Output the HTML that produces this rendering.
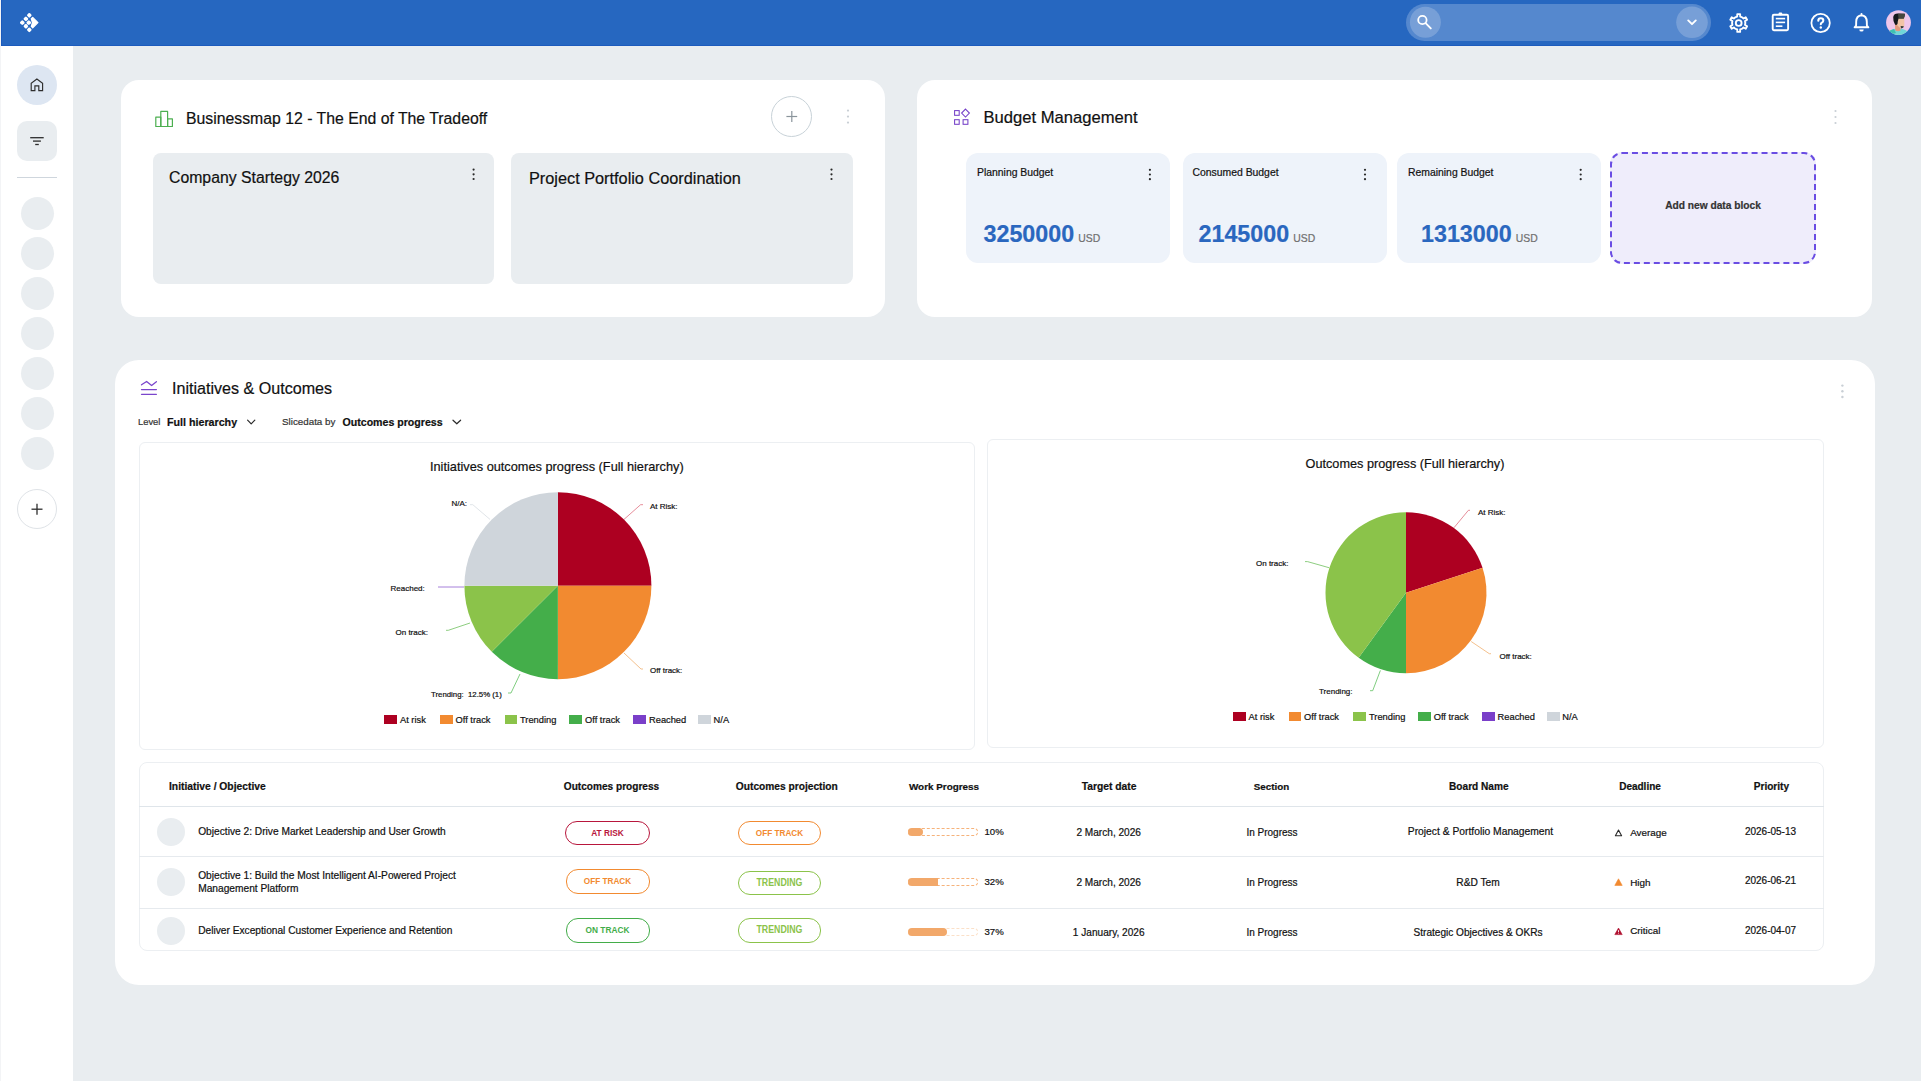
<!DOCTYPE html>
<html><head><meta charset="utf-8">
<style>
*{margin:0;padding:0;box-sizing:border-box}
html,body{width:1921px;height:1081px;overflow:hidden;background:#e9edf0;font-family:"Liberation Sans",sans-serif;color:#111}
.a{position:absolute}
.t{position:absolute;white-space:nowrap;height:20px;line-height:20px;-webkit-text-stroke:0.2px currentColor}
.c{text-align:center;width:300px}
.b{font-weight:bold}
</style></head><body>
<!-- left edge -->
<div class="a" style="left:0;top:0;width:1px;height:1081px;background:#f3f4f6"></div>
<!-- header -->
<div class="a" style="left:1px;top:0;width:1920px;height:46px;background:#2667c0;border-left:1px solid #1c5bbd;border-bottom:1px solid #1c5bbd"></div>
<!-- sidebar -->
<div class="a" style="left:1px;top:46px;width:72px;height:1035px;background:#fff"></div>

<!-- cards -->
<div class="a" style="left:121px;top:80px;width:764px;height:237px;background:#fff;border-radius:18px"></div>
<div class="a" style="left:917px;top:80px;width:955px;height:237px;background:#fff;border-radius:18px"></div>
<div class="a" style="left:115px;top:360px;width:1760px;height:625px;background:#fff;border-radius:24px"></div>

<!-- card1 inner -->
<div class="a" style="left:152.6px;top:153px;width:341.6px;height:131px;background:#e9edf0;border-radius:8px"></div>
<div class="a" style="left:511.3px;top:153px;width:341.3px;height:131px;background:#e9edf0;border-radius:8px"></div>
<div class="a" style="left:771.3px;top:96px;width:41px;height:41px;border:1px solid #c8d2d8;border-radius:50%"></div>

<!-- budget sub cards -->
<div class="a" style="left:966px;top:153px;width:204px;height:110px;background:#eef3fa;border-radius:12px"></div>
<div class="a" style="left:1183px;top:153px;width:204px;height:110px;background:#eef3fa;border-radius:12px"></div>
<div class="a" style="left:1397px;top:153px;width:204px;height:110px;background:#eef3fa;border-radius:12px"></div>
<div class="a" style="left:1610px;top:152px;width:206px;height:112px;background:#efedfb;border:2px dashed #6a4de3;border-radius:12px"></div>

<!-- chart boxes & table -->
<div class="a" style="left:139px;top:442px;width:836px;height:308px;border:1px solid #eceff2;border-radius:6px"></div>
<div class="a" style="left:987px;top:439px;width:837px;height:309px;border:1px solid #eceff2;border-radius:6px"></div>
<div class="a" style="left:139px;top:762px;width:1685px;height:189px;border:1px solid #eceff2;border-radius:8px;background:#fff"></div>
<div class="a" style="left:139px;top:806px;width:1685px;height:1px;background:#dfe5ea"></div>
<div class="a" style="left:139px;top:856px;width:1685px;height:1px;background:#e6eaee"></div>
<div class="a" style="left:139px;top:908px;width:1685px;height:1px;background:#e6eaee"></div>

<!-- SIDEBAR items -->
<div class="a" style="left:17px;top:65px;width:40px;height:40px;border-radius:50%;background:#dde6f2"></div>
<div class="a" style="left:17px;top:121px;width:40px;height:40px;border-radius:10px;background:#e9edf0"></div>
<div class="a" style="left:17px;top:177px;width:40px;height:1px;background:#cfd6dd"></div>
<div class="a" style="left:20.5px;top:196.5px;width:33px;height:33px;border-radius:50%;background:#e9edf0"></div>
<div class="a" style="left:20.5px;top:236.5px;width:33px;height:33px;border-radius:50%;background:#e9edf0"></div>
<div class="a" style="left:20.5px;top:276.5px;width:33px;height:33px;border-radius:50%;background:#e9edf0"></div>
<div class="a" style="left:20.5px;top:316.5px;width:33px;height:33px;border-radius:50%;background:#e9edf0"></div>
<div class="a" style="left:20.5px;top:356.5px;width:33px;height:33px;border-radius:50%;background:#e9edf0"></div>
<div class="a" style="left:20.5px;top:396.5px;width:33px;height:33px;border-radius:50%;background:#e9edf0"></div>
<div class="a" style="left:20.5px;top:436.5px;width:33px;height:33px;border-radius:50%;background:#e9edf0"></div>
<div class="a" style="left:17px;top:489px;width:40px;height:40px;border-radius:50%;border:1px solid #dfe3e7"></div>

<!-- table row circles -->
<div class="a" style="left:157px;top:818px;width:28px;height:28px;border-radius:50%;background:#e9edf0"></div>
<div class="a" style="left:157px;top:867.8px;width:28px;height:28px;border-radius:50%;background:#e9edf0"></div>
<div class="a" style="left:157px;top:916.5px;width:28px;height:28px;border-radius:50%;background:#e9edf0"></div>

<svg class="a" style="left:0;top:0" width="1921" height="1081" viewBox="0 0 1921 1081">

<!-- logo -->
<g fill="#fff">
<rect x="-1.95" y="-1.95" width="3.9" height="3.9" rx="1.15" transform="translate(29.3,15.3) rotate(45)"/>
<rect x="-1.95" y="-1.95" width="3.9" height="3.9" rx="1.15" transform="translate(25.9,18.9) rotate(45)"/>
<rect x="-1.95" y="-1.95" width="3.9" height="3.9" rx="1.15" transform="translate(22.3,22.6) rotate(45)"/>
<rect x="-1.95" y="-1.95" width="3.9" height="3.9" rx="1.15" transform="translate(25.9,26.2) rotate(45)"/>
<rect x="-1.95" y="-1.95" width="3.9" height="3.9" rx="1.15" transform="translate(29.3,29.8) rotate(45)"/>
<rect x="-1.95" y="-1.95" width="3.9" height="3.9" rx="1.15" transform="translate(28.8,22.6) rotate(45)"/>
<path d="M32.7,17.4 L37.9,22.6 L32.7,27.8 L31.3,26.4 L32.5,22.6 L31.3,18.8 Z" stroke="#fff" stroke-width="1.3" stroke-linejoin="round"/>
</g>
<!-- search -->
<rect x="1406" y="4" width="305" height="37" rx="18.5" fill="#ffffff" fill-opacity="0.22"/>
<circle cx="1425.4" cy="22.3" r="15.5" fill="#ffffff" fill-opacity="0.2"/>
<circle cx="1692" cy="22.3" r="15.8" fill="#ffffff" fill-opacity="0.2"/>
<circle cx="1422.4" cy="20" r="4.2" fill="none" stroke="#fff" stroke-width="1.8"/>
<line x1="1425.6" y1="23.2" x2="1430.8" y2="28.4" stroke="#fff" stroke-width="1.9" stroke-linecap="round"/>
<polyline points="1688.2,20.4 1692,24.2 1695.8,20.4" fill="none" stroke="#fff" stroke-width="1.9" stroke-linecap="round" stroke-linejoin="round"/>
<!-- gear -->
<path d="M1735.81,17.07 L1737.22,16.57 L1737.29,14.11 L1740.11,14.11 L1740.18,16.57 L1741.59,17.07 L1742.39,17.53 L1743.53,18.50 L1745.69,17.34 L1747.10,19.77 L1745.01,21.07 L1745.28,22.54 L1745.28,23.46 L1745.01,24.93 L1747.10,26.23 L1745.69,28.66 L1743.53,27.50 L1742.39,28.47 L1741.59,28.93 L1740.18,29.43 L1740.11,31.89 L1737.29,31.89 L1737.22,29.43 L1735.81,28.93 L1735.01,28.47 L1733.87,27.50 L1731.71,28.66 L1730.30,26.23 L1732.39,24.93 L1732.12,23.46 L1732.12,22.54 L1732.39,21.07 L1730.30,19.77 L1731.71,17.34 L1733.87,18.50 L1735.01,17.53 Z" fill="none" stroke="#fff" stroke-width="1.9" stroke-linejoin="round"/>
<circle cx="1738.7" cy="23" r="2.9" fill="none" stroke="#fff" stroke-width="1.9"/>
<!-- clipboard -->
<rect x="1772.7" y="14.8" width="15.4" height="15.4" rx="1.2" fill="none" stroke="#fff" stroke-width="1.9"/>
<rect x="1778.6" y="12.6" width="3.6" height="2.6" rx="1" fill="#fff"/>
<g stroke="#fff" stroke-width="1.6" stroke-linecap="butt">
<line x1="1775.8" y1="18.6" x2="1785.1" y2="18.6"/>
<line x1="1775.8" y1="22.4" x2="1785.1" y2="22.4"/>
<line x1="1775.8" y1="26.2" x2="1782.4" y2="26.2"/>
</g>
<!-- help -->
<circle cx="1820.6" cy="23" r="9.2" fill="none" stroke="#fff" stroke-width="1.8"/>
<path d="M1818.3,20.7 Q1818.3,18.3 1820.8,18.3 Q1823.3,18.3 1823.3,20.5 Q1823.3,21.9 1821.9,22.6 Q1820.8,23.2 1820.8,24.3" fill="none" stroke="#fff" stroke-width="2.1" stroke-linecap="round"/>
<circle cx="1820.8" cy="27.5" r="1.2" fill="#fff"/>
<!-- bell -->
<path d="M1861.5,15.2 Q1866.6,15.6 1866.8,21.6 L1866.9,25.6 L1868.4,27.3 L1854.6,27.3 L1856.1,25.6 L1856.2,21.6 Q1856.4,15.6 1861.5,15.2 Z" fill="none" stroke="#fff" stroke-width="1.9" stroke-linejoin="round"/>
<circle cx="1861.5" cy="13.9" r="1" fill="#fff"/>
<path d="M1859.3,29.4 A2.2,2.2 0 0 0 1863.7,29.4 Z" fill="#fff"/>
<!-- avatar -->
<defs><clipPath id="av"><circle cx="1898.5" cy="22.6" r="12.4"/></clipPath></defs>
<circle cx="1898.5" cy="22.6" r="12.4" fill="#efc6ea"/>
<g clip-path="url(#av)">
<path d="M1884,36 Q1890,28.5 1898.5,28.4 Q1907,28.5 1913,36 Z" fill="#6fd6d8"/>
<path d="M1885,36 Q1888,30 1894,29 L1896,33 Z" fill="#3fc0b0"/>
<path d="M1895,24 L1900.5,24 L1900.5,30.5 Q1898,32 1895.2,30.2 Z" fill="#e59a7c"/>
<path d="M1897,17.5 L1904.3,17.5 L1904.3,26 Q1902,28.5 1899.5,27.5 L1897,25 Z" fill="#f2c4a6"/>
<path d="M1900.5,26.2 Q1902.5,25.6 1904,26.6 Q1903.5,28.4 1901.2,28.4 Z" fill="#3a3a36"/>
<path d="M1893.2,17 Q1894,13.4 1898,13.6 L1904.8,13.8 Q1905,16.5 1903.8,18.4 L1898.6,18.4 Q1897.6,21 1897.5,24 Q1896.2,25.6 1895,24.6 Q1893,22 1893.2,17 Z" fill="#15171c"/>
<path d="M1898,13.8 L1904.8,13.8 Q1905,16.5 1903.8,18.4 L1898.6,18.4 Z" fill="#45463e"/>
</g>

<!-- sidebar icons -->
<path d="M31.2,90.6 V83.4 L36.9,79 L42.6,83.4 V90.6 H38.8 V85.8 H34.9 V90.6 Z" fill="none" stroke="#2d2d2d" stroke-width="1.15" stroke-linejoin="miter"/>
<g stroke="#2d2d2d" stroke-width="1.3">
<line x1="30.2" y1="137.7" x2="43.7" y2="137.7"/>
<line x1="33" y1="141.1" x2="40.9" y2="141.1"/>
<line x1="35.2" y1="144.5" x2="38.8" y2="144.5"/>
</g>
<g stroke="#2d2d2d" stroke-width="1.3">
<line x1="31.5" y1="509.2" x2="42.5" y2="509.2"/>
<line x1="37" y1="503.7" x2="37" y2="514.7"/>
</g>

<!-- card icons -->
<g fill="none" stroke="#4caf50" stroke-width="1.2" stroke-linejoin="round">
<rect x="155.8" y="117.1" width="5" height="9.4"/>
<rect x="160.8" y="111.4" width="6.8" height="15.1"/>
<rect x="167.6" y="118.9" width="4.8" height="7.6"/>
</g>
<g fill="none" stroke="#7540c8" stroke-width="1.05">
<rect x="954.6" y="110.6" width="4.6" height="4.7"/>
<rect x="954.6" y="119.7" width="4.6" height="4.6"/>
<rect x="963.1" y="119.7" width="4.8" height="4.6"/>
<path d="M965.5,109.1 L969.4,113.1 L965.5,117.1 L961.6,113.1 Z"/>
</g>
<g fill="none" stroke="#7a45cc" stroke-width="1.3" stroke-linecap="round" stroke-linejoin="round">
<polyline points="141.5,384.8 146.6,381.5 151.6,385.5 156.4,381.7"/>
<line x1="141.5" y1="389.6" x2="156.4" y2="389.6"/>
<line x1="141.5" y1="394.3" x2="156.4" y2="394.3"/>
</g>
<!-- plus in card1 -->
<g stroke="#8a949b" stroke-width="1.2">
<line x1="786.4" y1="116.5" x2="797.2" y2="116.5"/>
<line x1="791.8" y1="111.1" x2="791.8" y2="121.9"/>
</g>
<!-- menu dots -->
<g fill="#2a2a2a">
<circle cx="473.6" cy="169.6" r="1.1"/><circle cx="473.6" cy="174.3" r="1.1"/><circle cx="473.6" cy="179" r="1.1"/>
<circle cx="831.5" cy="169.6" r="1.1"/><circle cx="831.5" cy="174.3" r="1.1"/><circle cx="831.5" cy="179" r="1.1"/>
<circle cx="1149.9" cy="169.8" r="1.1"/><circle cx="1149.9" cy="174.5" r="1.1"/><circle cx="1149.9" cy="179.2" r="1.1"/>
<circle cx="1365" cy="169.8" r="1.1"/><circle cx="1365" cy="174.5" r="1.1"/><circle cx="1365" cy="179.2" r="1.1"/>
<circle cx="1580.7" cy="169.8" r="1.1"/><circle cx="1580.7" cy="174.5" r="1.1"/><circle cx="1580.7" cy="179.2" r="1.1"/>
</g>
<g fill="#c9cfd5">
<circle cx="848" cy="110.6" r="1.1"/><circle cx="848" cy="116.6" r="1.1"/><circle cx="848" cy="122.6" r="1.1"/>
<circle cx="1835.5" cy="111" r="1.1"/><circle cx="1835.5" cy="117" r="1.1"/><circle cx="1835.5" cy="123" r="1.1"/>
<circle cx="1842.4" cy="385.6" r="1.2"/><circle cx="1842.4" cy="391.3" r="1.2"/><circle cx="1842.4" cy="397" r="1.2"/>
</g>
<!-- select chevrons -->
<g fill="none" stroke="#2a2a2a" stroke-width="1.2" stroke-linecap="round" stroke-linejoin="round">
<polyline points="247.6,420.2 251.2,423.8 254.8,420.2"/>
<polyline points="453,420.2 456.8,423.8 460.6,420.2"/>
</g>
<!-- deadline icons -->
<path d="M1618.5,830 L1621.6,835.8 L1615.4,835.8 Z" fill="none" stroke="#2a2a2a" stroke-width="1.1" stroke-linejoin="round"/>
<path d="M1618.5,878.8 L1622.2,885.4 L1614.8,885.4 Z" fill="#f28a30" stroke="#f28a30" stroke-width="0.6" stroke-linejoin="round"/>
<path d="M1618.5,928 L1622.2,934.6 L1614.8,934.6 Z" fill="#b0102f" stroke="#b0102f" stroke-width="0.6" stroke-linejoin="round"/>
<line x1="1618.5" y1="930.2" x2="1618.5" y2="932.3" stroke="#fff" stroke-width="0.9"/><circle cx="1618.5" cy="933.5" r="0.45" fill="#fff"/>

<!-- PIES -->
<path fill="#ad0021" d="M557.90,585.70 L557.90,492.20 A93.5,93.5 0 0 1 651.40,585.70 Z"/>
<path fill="#f28a30" d="M557.90,585.70 L651.40,585.70 A93.5,93.5 0 0 1 557.90,679.20 Z"/>
<path fill="#44ae4a" d="M557.90,585.70 L557.90,679.20 A93.5,93.5 0 0 1 491.79,651.81 Z"/>
<path fill="#8bc34a" d="M557.90,585.70 L491.79,651.81 A93.5,93.5 0 0 1 464.40,585.70 Z"/>
<path fill="#cfd5db" d="M557.90,585.70 L464.40,585.70 A93.5,93.5 0 0 1 557.90,492.20 Z"/>
<path fill="#ad0021" d="M1406.00,592.70 L1406.00,512.20 A80.5,80.5 0 0 1 1482.56,567.82 Z"/>
<path fill="#f28a30" d="M1406.00,592.70 L1482.56,567.82 A80.5,80.5 0 0 1 1406.00,673.20 Z"/>
<path fill="#44ae4a" d="M1406.00,592.70 L1406.00,673.20 A80.5,80.5 0 0 1 1358.68,657.83 Z"/>
<path fill="#8bc34a" d="M1406.00,592.70 L1358.68,657.83 A80.5,80.5 0 0 1 1406.00,512.20 Z"/>
<!-- leader lines pie1 -->
<g fill="none" stroke-width="0.8">
<polyline stroke="#e07080" points="624,519.4 640.6,504.7 643,504.7"/>
<polyline stroke="#f0b070" points="624,653 641,669 643,669"/>
<polyline stroke="#60c060" points="520,674 511,693 508,693"/>
<polyline stroke="#70c060" points="470,623 448.3,630.3 446,630.3"/>
<polyline stroke="#9060d0" points="464,587 438,587"/>
<polyline stroke="#d8dde2" points="490,519.4 472.8,504.7 470,504.7"/>
<polyline stroke="#e07080" points="1454,527.7 1468.4,510.3 1470,510.3"/>
<polyline stroke="#70c060" points="1329,567.7 1307.5,561.6 1305,561.6"/>
<polyline stroke="#f0b070" points="1471.2,641.5 1489.3,653.7 1491,653.7"/>
<polyline stroke="#60c060" points="1380.4,670.4 1372.7,690.7 1370,690.7"/>
</g>
</svg>

<!-- TEXTS -->
<div class="t" style="left:186px;top:108.5px;font-size:15.8px">Businessmap 12 - The End of The Tradeoff</div>
<div class="t" style="left:169px;top:168px;font-size:15.8px">Company Startegy 2026</div>
<div class="t" style="left:529px;top:168px;font-size:16.3px">Project Portfolio Coordination</div>
<div class="t" style="left:983.5px;top:108px;font-size:16.6px">Budget Management</div>

<div class="t" style="left:977px;top:162.5px;font-size:10.4px">Planning Budget</div>
<div class="t" style="left:1192.5px;top:162.5px;font-size:10.4px">Consumed Budget</div>
<div class="t" style="left:1408px;top:162.5px;font-size:10.4px">Remaining Budget</div>
<div class="t b" style="left:983.5px;top:224.2px;font-size:23.3px;color:#2a67bf">3250000<span style="font-weight:normal;font-size:10.4px;color:#707070;margin-left:4px">USD</span></div>
<div class="t b" style="left:1198.5px;top:224.2px;font-size:23.3px;color:#2a67bf">2145000<span style="font-weight:normal;font-size:10.4px;color:#707070;margin-left:4px">USD</span></div>
<div class="t b" style="left:1421px;top:224.2px;font-size:23.3px;color:#2a67bf">1313000<span style="font-weight:normal;font-size:10.4px;color:#707070;margin-left:4px">USD</span></div>
<div class="t b c" style="left:1563px;top:195.5px;font-size:10.2px;color:#333">Add new data block</div>

<div class="t" style="left:172px;top:378px;font-size:16.1px">Initiatives &amp; Outcomes</div>
<div class="t" style="left:138px;top:412px;font-size:9.4px;color:#333">Level</div>
<div class="t b" style="left:167px;top:412px;font-size:10.7px">Full hierarchy</div>
<div class="t" style="left:282px;top:412px;font-size:9.8px;color:#333">Slicedata by</div>
<div class="t b" style="left:342.5px;top:412px;font-size:10.6px">Outcomes progress</div>

<div class="t c" style="left:406.8px;top:456.5px;font-size:12.75px">Initiatives outcomes progress (Full hierarchy)</div>
<div class="t c" style="left:1255px;top:454px;font-size:12.7px">Outcomes progress (Full hierarchy)</div>


<!-- pie labels -->
<div class="t" style="left:650px;top:496.5px;font-size:8px">At Risk:</div>
<div class="t" style="left:650px;top:660.5px;font-size:8px">Off track:</div>
<div class="t" style="left:431px;top:685px;font-size:7.8px">Trending:&nbsp; 12.5% (1)</div>
<div class="t" style="left:395.5px;top:622.5px;font-size:8px">On track:</div>
<div class="t" style="left:390.5px;top:579.1px;font-size:8px">Reached:</div>
<div class="t" style="left:451.5px;top:494px;font-size:8px">N/A:</div>
<div class="t" style="left:1478px;top:502.5px;font-size:8px">At Risk:</div>
<div class="t" style="left:1256px;top:553.6px;font-size:8px">On track:</div>
<div class="t" style="left:1499.5px;top:646.6px;font-size:8px">Off track:</div>
<div class="t" style="left:1319px;top:682px;font-size:8px">Trending:</div>

<!-- legends -->
<div class="a" style="left:384.4px;top:714.5px;width:12.5px;height:9.5px;background:#ad0021"></div>
<div class="t" style="left:400px;top:709.9px;font-size:9.3px">At risk</div>
<div class="a" style="left:440.2px;top:714.5px;width:12.5px;height:9.5px;background:#f28a30"></div>
<div class="t" style="left:455.5px;top:709.9px;font-size:9.3px">Off track</div>
<div class="a" style="left:504.7px;top:714.5px;width:12.5px;height:9.5px;background:#8bc34a"></div>
<div class="t" style="left:520px;top:709.9px;font-size:9.3px">Trending</div>
<div class="a" style="left:569.3px;top:714.5px;width:12.5px;height:9.5px;background:#44ae4a"></div>
<div class="t" style="left:585px;top:709.9px;font-size:9.3px">Off track</div>
<div class="a" style="left:633.2px;top:714.5px;width:12.5px;height:9.5px;background:#7a3fc9"></div>
<div class="t" style="left:649px;top:709.9px;font-size:9.3px">Reached</div>
<div class="a" style="left:698px;top:714.5px;width:12.5px;height:9.5px;background:#cfd5db"></div>
<div class="t" style="left:713.6px;top:709.9px;font-size:9.3px">N/A</div>

<div class="a" style="left:1233px;top:711.7px;width:12.5px;height:9.5px;background:#ad0021"></div>
<div class="t" style="left:1248.6px;top:707.1px;font-size:9.3px">At risk</div>
<div class="a" style="left:1288.8px;top:711.7px;width:12.5px;height:9.5px;background:#f28a30"></div>
<div class="t" style="left:1304px;top:707.1px;font-size:9.3px">Off track</div>
<div class="a" style="left:1353.2px;top:711.7px;width:12.5px;height:9.5px;background:#8bc34a"></div>
<div class="t" style="left:1369px;top:707.1px;font-size:9.3px">Trending</div>
<div class="a" style="left:1418px;top:711.7px;width:12.5px;height:9.5px;background:#44ae4a"></div>
<div class="t" style="left:1433.7px;top:707.1px;font-size:9.3px">Off track</div>
<div class="a" style="left:1482.3px;top:711.7px;width:12.5px;height:9.5px;background:#7a3fc9"></div>
<div class="t" style="left:1497.6px;top:707.1px;font-size:9.3px">Reached</div>
<div class="a" style="left:1547px;top:711.7px;width:12.5px;height:9.5px;background:#cfd5db"></div>
<div class="t" style="left:1562.3px;top:707.1px;font-size:9.3px">N/A</div>

<!-- table headers -->
<div class="t b" style="left:169px;top:777px;font-size:10.3px">Initiative / Objective</div>
<div class="t b c" style="left:461.5px;top:777px;font-size:10.1px">Outcomes progress</div>
<div class="t b c" style="left:636.8px;top:777px;font-size:10.2px">Outcomes projection</div>
<div class="t b c" style="left:794px;top:777px;font-size:9.9px">Work Progress</div>
<div class="t b c" style="left:959px;top:777px;font-size:10.3px">Target date</div>
<div class="t b c" style="left:1121.5px;top:777px;font-size:9.8px">Section</div>
<div class="t b c" style="left:1328.8px;top:777px;font-size:10.1px">Board Name</div>
<div class="t b c" style="left:1490px;top:777px;font-size:10px">Deadline</div>
<div class="t b c" style="left:1621.4px;top:777px;font-size:10.1px">Priority</div>

<!-- rows -->
<div class="t" style="left:198.2px;top:822.4px;font-size:10.2px">Objective 2: Drive Market Leadership and User Growth</div>
<div class="a" style="left:198.2px;top:869px;font-size:10.2px;line-height:13px;white-space:nowrap;-webkit-text-stroke:0.2px currentColor">Objective 1: Build the Most Intelligent AI-Powered Project<br>Management Platform</div>
<div class="t" style="left:198.2px;top:920.7px;font-size:10.2px">Deliver Exceptional Customer Experience and Retention</div>

<div class="t c" style="left:958.7px;top:822.6px;font-size:10.1px">2 March, 2026</div>
<div class="t c" style="left:958.7px;top:872.6px;font-size:10.1px">2 March, 2026</div>
<div class="t c" style="left:958.7px;top:923.2px;font-size:10.1px">1 January, 2026</div>
<div class="t c" style="left:1122px;top:822.6px;font-size:10px">In Progress</div>
<div class="t c" style="left:1122px;top:872.6px;font-size:10px">In Progress</div>
<div class="t c" style="left:1122px;top:923.2px;font-size:10px">In Progress</div>
<div class="t c" style="left:1330.5px;top:822.4px;font-size:10.3px">Project &amp; Portfolio Management</div>
<div class="t c" style="left:1328px;top:873.3px;font-size:10.2px">R&amp;D Tem</div>
<div class="t c" style="left:1328px;top:922.5px;font-size:10.1px">Strategic Objectives &amp; OKRs</div>
<div class="t" style="left:1630.2px;top:822.5px;font-size:9.9px">Average</div>
<div class="t" style="left:1630.2px;top:872.8px;font-size:9.9px">High</div>
<div class="t" style="left:1630.2px;top:921.3px;font-size:9.9px">Critical</div>
<div class="t c" style="left:1620.5px;top:822.4px;font-size:10px">2026-05-13</div>
<div class="t c" style="left:1620.5px;top:870.5px;font-size:10px">2026-06-21</div>
<div class="t c" style="left:1620.5px;top:921.4px;font-size:10px">2026-04-07</div>

<!-- pills -->
<div class="a b" style="left:565px;top:820.6px;width:85px;height:24.4px;border:1.5px solid #b8163c;border-radius:12px;color:#b8163c;font-size:8.3px;line-height:23.4px;text-align:center"><span style="display:inline-block;transform:scaleY(1.18)">AT RISK</span></div>
<div class="a b" style="left:565.5px;top:869.3px;width:84px;height:24.4px;border:1.5px solid #f28a30;border-radius:12px;color:#f28a30;font-size:8.2px;line-height:23.4px;text-align:center"><span style="display:inline-block;transform:scaleY(1.18)">OFF TRACK</span></div>
<div class="a b" style="left:565.5px;top:918.4px;width:84px;height:24.4px;border:1.5px solid #43ad49;border-radius:12px;color:#43ad49;font-size:8.3px;line-height:23.4px;text-align:center"><span style="display:inline-block;transform:scaleY(1.18)">ON TRACK</span></div>
<div class="a b" style="left:737.7px;top:820.6px;width:83.6px;height:24.4px;border:1.5px solid #f28a30;border-radius:12px;color:#f28a30;font-size:8.2px;line-height:23.4px;text-align:center"><span style="display:inline-block;transform:scaleY(1.18)">OFF TRACK</span></div>
<div class="a b" style="left:737.7px;top:870.5px;width:83.6px;height:24.4px;border:1.5px solid #8bc34a;border-radius:12px;color:#8bc34a;font-size:8.8px;line-height:23.4px;text-align:center"><span style="display:inline-block;transform:scaleY(1.18)">TRENDING</span></div>
<div class="a b" style="left:737.7px;top:918.4px;width:83.6px;height:24.4px;border:1.5px solid #8bc34a;border-radius:12px;color:#8bc34a;font-size:8.8px;line-height:23.4px;text-align:center"><span style="display:inline-block;transform:scaleY(1.18)">TRENDING</span></div>

<!-- progress bars -->
<div class="a" style="left:908px;top:828px;width:70px;height:8px;border:1px dashed #f6b27a;border-radius:4px"></div>
<div class="a" style="left:908px;top:828px;width:15px;height:8px;background:#f2a86a;border-radius:4px"></div>
<div class="a" style="left:908px;top:878px;width:70px;height:8px;border:1px dashed #f6b27a;border-radius:4px"></div>
<div class="a" style="left:908px;top:878px;width:30px;height:8px;background:#f2a86a;border-radius:4px 0 0 4px"></div>
<div class="a" style="left:908px;top:928.4px;width:70px;height:8px;border:1px dashed #fbe0c8;border-radius:4px"></div>
<div class="a" style="left:908px;top:928.4px;width:39px;height:8px;background:#f2a86a;border-radius:4px"></div>
<div class="t" style="left:984.5px;top:821.8px;font-size:9.6px">10%</div>
<div class="t" style="left:984.5px;top:871.8px;font-size:9.6px">32%</div>
<div class="t" style="left:984.5px;top:922px;font-size:9.6px">37%</div>

</body></html>
